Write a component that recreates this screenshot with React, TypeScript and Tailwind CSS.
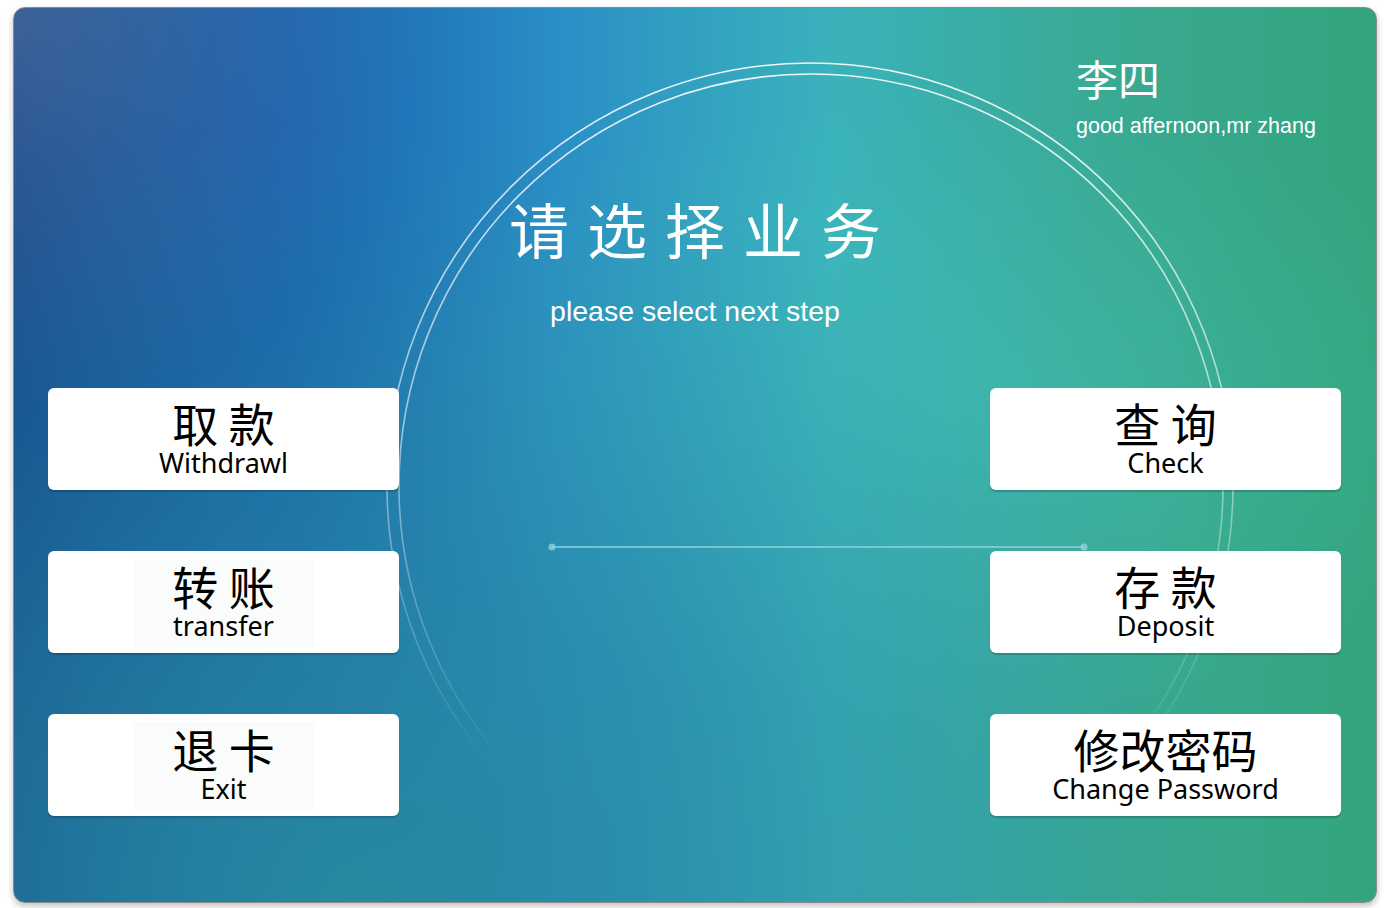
import React from "react";

type Action = { zh: string; en: string; inset?: boolean };

const leftActions: Action[] = [
  { zh: "取 款", en: "Withdrawl" },
  { zh: "转 账", en: "transfer", inset: true },
  { zh: "退 卡", en: "Exit", inset: true },
];

const rightActions: Action[] = [
  { zh: "查 询", en: "Check" },
  { zh: "存 款", en: "Deposit" },
  { zh: "修改密码", en: "Change Password" },
];

const ActionButton = ({ action }: { action: Action }) => (
  <button
    type="button"
    className="flex h-[102px] w-[351px] flex-col items-center rounded-[6px] bg-white shadow-[0_2px_1px_rgba(0,0,0,0.18)]"
  >
    <div
      className={`mt-[8px] flex h-[89px] min-w-[182px] flex-col items-center gap-[4px] pt-[3px] text-black [font-family:'Noto_Sans','Noto_Sans_CJK_SC',sans-serif] ${
        action.inset ? "bg-[#fafcfb]" : ""
      }`}
    >
      <span className="text-[46px] leading-none [font-family:'Noto_Sans_CJK_SC',sans-serif] whitespace-nowrap">
        {action.zh}
      </span>
      <span className="text-[27px] leading-none whitespace-nowrap">{action.en}</span>
    </div>
  </button>
);

const Decorations = () => (
  <svg className="pointer-events-none absolute inset-0" width="1364" height="896" viewBox="0 0 1364 896">
    <defs>
      <linearGradient id="arcFade" gradientUnits="userSpaceOnUse" x1="0" y1="55" x2="0" y2="760">
        <stop offset="0" stopColor="#ffffff" stopOpacity="0.9" />
        <stop offset="0.55" stopColor="#ffffff" stopOpacity="0.5" />
        <stop offset="1" stopColor="#ffffff" stopOpacity="0" />
      </linearGradient>
    </defs>
    <circle cx="796" cy="478" r="423" fill="none" stroke="url(#arcFade)" strokeWidth="1.6" />
    <circle cx="797" cy="478" r="412" fill="none" stroke="url(#arcFade)" strokeWidth="1.6" />
    <line x1="538" y1="539" x2="1070" y2="539" stroke="#8fd3dc" strokeOpacity="0.75" strokeWidth="2" />
    <circle cx="538" cy="539" r="3.5" fill="#8fd3dc" fillOpacity="0.8" />
    <circle cx="1070" cy="539" r="3.5" fill="#8fd3dc" fillOpacity="0.8" />
  </svg>
);

export default function App() {
  return (
    <div className="min-h-[908px] bg-white pl-[13px] pt-[7px]">
      <div className="relative flex h-[896px] w-[1364px] flex-col overflow-hidden rounded-[12px] border border-[#8c8c8c] shadow-[0_3px_6px_rgba(0,0,0,0.25)] bg-[radial-gradient(circle_at_0%_0%,rgba(140,150,170,0.35),transparent_25%),radial-gradient(ellipse_at_25%_100%,rgba(40,138,158,0.95),transparent_62%),radial-gradient(ellipse_at_68%_45%,rgba(70,200,190,0.35),transparent_45%),linear-gradient(90deg,#11468e_0%,#1962ae_20%,#2a8fc6_40%,#3ab2bb_60%,#39aa93_80%,#33a47d_100%)]">
        <Decorations />
        <header className="relative grid h-[380px] grid-cols-3">
          <div />
          <div className="flex flex-col items-center pt-[190px] text-white">
            <h1 className="pl-[18px] text-[60px] leading-none tracking-[18px] [font-family:'Noto_Sans_CJK_SC',sans-serif] whitespace-nowrap">
              请选择业务
            </h1>
            <p className="mt-[39px] text-[28.5px] leading-none [font-family:'Liberation_Sans',Arial,sans-serif] whitespace-nowrap">
              please select next step
            </p>
          </div>
          <div className="pl-[154px] pt-[49px] text-white">
            <div className="text-[42px] leading-none [font-family:'Noto_Sans_CJK_SC',sans-serif]">李四</div>
            <div className="mt-[17px] text-[21.5px] leading-none [font-family:'Liberation_Sans',Arial,sans-serif] whitespace-nowrap">
              good affernoon,mr zhang
            </div>
          </div>
        </header>
        <main className="relative flex justify-between pl-[34px] pr-[35px]">
          <div className="flex flex-col gap-[61px]">
            {leftActions.map((a) => (
              <ActionButton key={a.en} action={a} />
            ))}
          </div>
          <div className="flex flex-col gap-[61px]">
            {rightActions.map((a) => (
              <ActionButton key={a.en} action={a} />
            ))}
          </div>
        </main>
      </div>
    </div>
  );
}
